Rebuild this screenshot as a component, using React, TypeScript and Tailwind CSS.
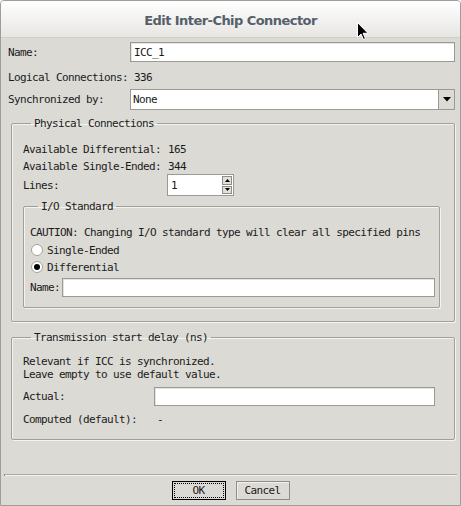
const font = { fontFamily: '"DejaVu Sans Mono", "Liberation Mono", monospace' };

const Entry = ({ value = "", className = "" }: { value?: string; className?: string }) => (
  <div
    className={`flex h-full items-center border border-[#9b9993] bg-white pl-[3px] shadow-[inset_1px_1px_0_#e4e3df] ${className}`}
  >
    {value}
  </div>
);

const Radio = ({ checked }: { checked?: boolean }) => (
  <span className="flex h-[12px] w-[12px] items-center justify-center rounded-full border border-[#a4a29c] bg-white">
    {checked && <span className="h-[6px] w-[6px] rounded-full bg-black" />}
  </span>
);

const Group = ({ title, className = "", children }: { title: string; className?: string; children: React.ReactNode }) => (
  <fieldset
    className={`m-0 min-w-0 rounded-[2px] border border-[#a09f9a] shadow-[inset_1px_1px_0_#f4f3f0,1px_1px_0_#f4f3f0] ${className}`}
  >
    <legend className="ml-[8px] h-[13px] px-[3px] leading-[13px]">{title}</legend>
    {children}
  </fieldset>
);

const App = () => {
  return (
    <div
      className="relative flex h-[506px] w-[461px] flex-col overflow-hidden rounded-t-[4px] border border-[#9d9d9b] bg-[#dcdad5] text-[11px] leading-[13px] tracking-[-0.62px] text-[#1b1b1b]"
      style={font}
    >
      <div className="flex h-[37px] shrink-0 items-center justify-center border-b border-[#d0cec9] bg-gradient-to-b from-white to-[#e7e6e3]">
        <span className="pt-[2px] font-['DejaVu_Sans'] text-[13px] font-bold tracking-[-0.55px] text-[#55606b]">
          Edit Inter-Chip Connector
        </span>
      </div>

      <div className="flex flex-1 flex-col pl-[7px] pr-[5px]">
        <div className="mt-[4px] flex h-[20px] items-center">
          <span className="w-[122px]">Name:</span>
          <Entry value="ICC_1" className="flex-1" />
        </div>
        <div className="mt-[5px] flex h-[20px] items-center">
          <span>Logical Connections: 336</span>
        </div>
        <div className="mt-[2px] flex h-[21px] items-center">
          <span className="w-[122px]">Synchronized by:</span>
          <div className="flex h-full flex-1 border border-[#9b9993] bg-white">
            <span className="flex flex-1 items-center pl-[2px]">None</span>
            <span className="flex w-[16px] items-center justify-center border-l border-[#9b9993] bg-[#dcdad5]">
              <svg width="8" height="5" viewBox="0 0 8 5">
                <path d="M0 0h8L4 4.5z" fill="#000" />
              </svg>
            </span>
          </div>
        </div>

        <Group title="Physical Connections" className="ml-[3px] mt-[7px] pl-[11px] pr-[14px] pb-[13px]">
          <div className="mt-[11px] flex h-[17px] items-center">
            <span className="w-[145px]">Available Differential:</span>
            <span>165</span>
          </div>
          <div className="flex h-[16px] items-center">
            <span className="w-[145px]">Available Single-Ended:</span>
            <span>344</span>
          </div>
          <div className="flex h-[22px] items-center">
            <span className="w-[144px]">Lines:</span>
            <div className="flex h-full w-[67px] border border-[#9b9993] bg-white">
              <span className="flex flex-1 items-center pl-[3px]">1</span>
              <span className="my-[1px] mr-[1px] flex w-[10px] flex-col gap-[1px]">
                <span className="flex flex-1 items-center justify-center border border-[#8e8c86] bg-[#e2e0db]">
                  <svg width="5" height="3" viewBox="0 0 5 3"><path d="M2.5 0L5 3H0z" fill="#000" /></svg>
                </span>
                <span className="flex flex-1 items-center justify-center border border-[#8e8c86] bg-[#e2e0db]">
                  <svg width="5" height="3" viewBox="0 0 5 3"><path d="M0 0h5L2.5 3z" fill="#000" /></svg>
                </span>
              </span>
            </div>
          </div>

          <Group title="I/O Standard" className="mt-[4px] pl-[6px] pr-[4px] pb-[10px]">
            <div className="mt-[11px] flex h-[16px] items-center">
              CAUTION: Changing I/O standard type will clear all specified pins
            </div>
            <div className="mt-[2px] flex h-[16px] items-center gap-[4px] pl-[1px]">
              <Radio />
              <span>Single-Ended</span>
            </div>
            <div className="mt-[1px] flex h-[16px] items-center gap-[4px] pl-[1px]">
              <Radio checked />
              <span>Differential</span>
            </div>
            <div className="mt-[3px] flex h-[19px] items-center">
              <span className="w-[32px]">Name:</span>
              <Entry className="flex-1" />
            </div>
          </Group>
        </Group>

        <Group title="Transmission start delay (ns)" className="ml-[3px] mt-[9px] pl-[11px] pr-[19px] pb-[12px]">
          <div className="mt-[11px]">Relevant if ICC is synchronized.</div>
          <div>Leave empty to use default value.</div>
          <div className="mt-[6px] flex h-[19px] items-center">
            <span className="w-[131px]">Actual:</span>
            <Entry className="flex-1" />
          </div>
          <div className="mt-[5px] flex h-[16px] items-center">
            <span className="w-[134px]">Computed (default):</span>
            <span>-</span>
          </div>
        </Group>

        <div className="flex-1" />
        <div className="ml-[-4px] mr-[-2px] h-[2px] border-t border-l border-[#a9a8a3] border-l-[#7f7e7a] bg-white/70" />
        <div className="mt-[5px] mb-[5px] flex justify-center gap-[10px] pr-[2px]">
          <button className="flex h-[19px] w-[54px] items-center justify-center border border-black bg-[#dcdad5] p-[1px]">
            <span className="flex h-full w-full items-center justify-center border border-dotted border-black">OK</span>
          </button>
          <button className="flex h-[19px] w-[54px] items-center justify-center border border-[#8f8d87] bg-[#dcdad5] shadow-[inset_1px_1px_0_#f2f1ee]">
            Cancel
          </button>
        </div>
      </div>

      <svg className="absolute left-[356px] top-[21px]" width="12" height="19" viewBox="0 0 12 19">
        <path d="M0.5 0.5v15l3.5-3.5 2.5 5.5 2-1-2.5-5.2h5z" fill="#000" stroke="#fff" strokeWidth="1" />
      </svg>
    </div>
  );
};

export default App;
